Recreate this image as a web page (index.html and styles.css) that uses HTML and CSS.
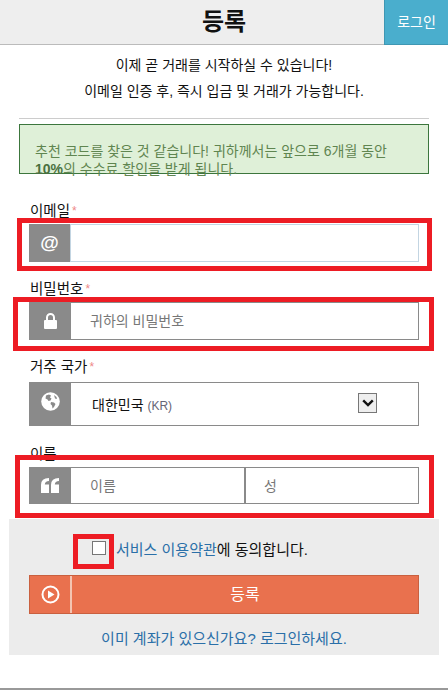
FILE: index.html
```html
<!DOCTYPE html>
<html lang="ko">
<head>
    <meta charset="UTF-8">
    <meta name="viewport" content="width=device-width, initial-scale=1.0">
    <title>등록</title>
    <link rel="stylesheet" href="styles.css">
</head>
<body>
    <div class="topbar">
        <h1>등록</h1>
        <a class="login-btn" href="#">로그인</a>
    </div>

    <p class="intro first">이제 곧 거래를 시작하실 수 있습니다!</p>
    <p class="intro">이메일 인증 후, 즉시 입금 및 거래가 가능합니다.</p>
    <hr class="divider">

    <div class="notice">
        <div class="notice-text">추천 코드를 찾은 것 같습니다! 귀하께서는 앞으로 6개월 동안 <b>10%</b>의 수수료 할인을 받게 됩니다.</div>
    </div>

    <form class="form">
        <label class="label label-email">이메일<span class="req">*</span></label>
        <div class="group group-email">
            <span class="icon at">@</span>
            <input class="field focus" type="text">
            <span class="mark mark-email"></span>
        </div>

        <label class="label label-pass">비밀번호<span class="req">*</span></label>
        <div class="group group-pass">
            <span class="icon">
                <svg width="13" height="16" viewBox="0 0 13 16"><path fill="#fff" fill-rule="evenodd" d="M2 7V4.500a4.500 4.500 0 0 1 9 0V7h1a1 1 0 0 1 1 1v7a1 1 0 0 1-1 1H1a1 1 0 0 1-1-1V8a1 1 0 0 1 1-1zM4 7h5V4.500a2.500 2.500 0 0 0-5 0z"/></svg>
            </span>
            <input class="field" type="password" placeholder="귀하의 비밀번호">
            <span class="mark mark-pass"></span>
        </div>

        <label class="label label-country">거주 국가<span class="req">*</span></label>
        <div class="group group-country">
            <span class="icon icon-top">
                <svg width="19" height="19" viewBox="0 0 19 19"><circle cx="9.500" cy="9.500" r="9.300" fill="#fff"/><path fill="#8a8a8a" d="M5 3.500l3-1 2 1-1 2 1.500 1-1 2-2 .5-1-1.500-2-1zM10 10l3 .5 1.500 1.500-1.500 3-1.500 1.500-.5-3-1.500-1.500zM13 3l2.500 2 .5 2-2-.5z"/></svg>
            </span>
            <div class="country">
                <span>대한민국 <small>(KR)</small></span>
                <span class="arrow">
                    <svg width="12" height="8" viewBox="0 0 12 8"><path fill="none" stroke="#111" stroke-width="2.400" d="M1.200 1.300L6 6l4.800-4.700"/></svg>
                </span>
            </div>
        </div>

        <label class="label label-name">이름</label>
        <div class="group group-name">
            <span class="icon">
                <svg width="18" height="15" viewBox="0 0 18 15"><path fill="#fff" d="M8 0v3Q4 3 3.800 6.500H8V15H0V7Q0 0 8 0zM18 0v3q-4 0-4.200 3.500H18V15h-8V7q0-7 8-7z"/></svg>
            </span>
            <input class="field" type="text" placeholder="이름">
            <input class="field last-name" type="text" placeholder="성">
            <span class="mark mark-name"></span>
        </div>

        <div class="panel">
            <div class="terms">
                <span class="check"><span class="mark mark-check"></span></span>
                <span><a href="#">서비스 이용약관</a>에 동의합니다.</span>
            </div>
            <button class="submit" type="button">
                <span class="submit-icon">
                    <svg width="19" height="19" viewBox="0 0 19 19"><circle cx="9.500" cy="9.500" r="8" fill="none" stroke="#fff" stroke-width="2"/><path fill="#fff" d="M7 5.500l6.500 4-6.500 4z"/></svg>
                </span>
                <span class="submit-text">등록</span>
            </button>
            <a class="have-account" href="#">이미 계좌가 있으신가요? 로그인하세요.</a>
        </div>
    </form>

    <div class="bottom-line"></div>
</body>
</html>
```

FILE: styles.css
```css
* {
    box-sizing: border-box;
}
body {
    margin: 0;
    height: 690px;
    overflow: hidden;
    background: #fff;
    color: #111;
    font-family: "Liberation Sans", "Noto Sans CJK KR", sans-serif;
    font-size: 14px;
}
a {
    color: #2a6fa8;
    text-decoration: none;
}
.topbar {
    display: flex;
    justify-content: center;
    align-items: center;
    position: relative;
    height: 45px;
    background: #eee;
    border-bottom: 1px solid #bbb;
}
.topbar h1 {
    margin: 0;
    font-size: 24px;
    line-height: 44px;
}
.login-btn {
    position: absolute;
    top: 0;
    right: 0;
    width: 64px;
    height: 45px;
    line-height: 44px;
    text-align: center;
    color: #fff;
    font-size: 14px;
    background: #4aaecd;
    border-left: 1px solid #3f97b3;
    border-bottom: 1px solid #3f97b3;
}
.intro {
    margin: 0;
    height: 26px;
    line-height: 26px;
    text-align: center;
}
.intro.first {
    margin-top: 7px;
}
.divider {
    margin: 14px 19px 5px;
    border: 0;
    border-top: 1px solid #ccc;
}
.notice {
    height: 50px;
    margin: 0 19px;
    padding: 17px 15px 0;
    background: #dff0d8;
    border: 1px solid #3c763d;
    color: #5f8550;
    line-height: 18px;
}
.notice b {
    color: #4a7040;
}
.form {
    display: flex;
    flex-direction: column;
}
.label {
    display: block;
    margin-left: 30px;
    height: 16px;
    line-height: 16px;
    font-size: 14.500px;
}
.label-email {
    margin-top: 29px;
}
.label-pass {
    margin-top: 19px;
}
.label-country {
    margin-top: 19px;
}
.label-name {
    margin-top: 20px;
}
.req {
    margin-left: 2px;
    color: #e88;
    font-size: 12px;
    vertical-align: top;
}
.group {
    display: flex;
    position: relative;
    margin: 0 29px;
}
.group-email {
    height: 38px;
    margin-top: 5px;
}
.group-pass {
    height: 38px;
    margin-top: 5px;
}
.group-country {
    height: 44px;
    margin-top: 7px;
}
.group-name {
    height: 37px;
    margin-top: 5px;
}
.icon {
    display: flex;
    flex: none;
    justify-content: center;
    align-items: center;
    width: 42px;
    background: #8a8a8a;
    color: #fff;
}
.icon-top {
    padding-bottom: 6px;
}
.at {
    width: 41px;
    font-size: 19px;
    font-weight: bold;
}
.field {
    flex: 1;
    min-width: 0;
    padding: 0 0 0 19px;
    border: 1px solid #8a8a8a;
    border-left: 0;
    border-radius: 0;
    outline: none;
    font: inherit;
    font-size: 14px;
    color: #111;
}
.field::placeholder {
    color: #777;
}
.field.focus {
    border: 1px solid #c3d5e2;
}
.last-name {
    padding-left: 18px;
    border-left: 1px solid #8a8a8a;
}
.country {
    display: flex;
    flex: 1;
    justify-content: space-between;
    align-items: center;
    padding: 0 41px 0 21px;
    border: 1px solid #8a8a8a;
    border-left: 0;
}
.country small {
    color: #667;
    font-size: 12px;
}
.arrow {
    display: flex;
    justify-content: center;
    align-items: center;
    width: 19px;
    height: 20px;
    margin-bottom: 3px;
    background: #eee;
    border: 1px solid #777;
}
.mark {
    position: absolute;
    border: 5px solid #ed1c24;
    pointer-events: none;
}
.mark-email {
    top: -6px;
    left: -12px;
    right: -13px;
    bottom: -9px;
}
.mark-pass {
    top: -5px;
    left: -16px;
    right: -15px;
    bottom: -11px;
}
.mark-name {
    top: -12px;
    left: -14px;
    right: -15px;
    bottom: -14px;
}
.mark-check {
    top: -8px;
    left: -20px;
    right: -9px;
    bottom: -15px;
}
.panel {
    display: flex;
    flex-direction: column;
    height: 136px;
    margin: 15px 9px 0;
    padding: 22px 20px 0;
    background: #ececec;
}
.terms {
    display: flex;
    align-items: center;
    height: 14px;
    padding-left: 63px;
    gap: 10px;
    font-size: 15px;
}
.check {
    position: relative;
    flex: none;
    width: 14px;
    height: 14px;
    background: #fff;
    border: 1px solid #767676;
}
.submit {
    display: flex;
    align-items: stretch;
    height: 39px;
    margin-top: 20px;
    padding: 0;
    background: #e9714e;
    border: 1px solid #c9603f;
    color: #fff;
    font: inherit;
}
.submit-icon {
    display: flex;
    flex: none;
    justify-content: center;
    align-items: center;
    width: 42px;
    border-right: 2px solid #f4c4b2;
}
.submit-text {
    flex: 1;
    font-size: 16px;
    line-height: 37px;
    text-align: center;
}
.have-account {
    margin-top: 13px;
    text-align: center;
    font-size: 15px;
}
.bottom-line {
    height: 2px;
    margin-top: 33px;
    background: #999;
}
```
